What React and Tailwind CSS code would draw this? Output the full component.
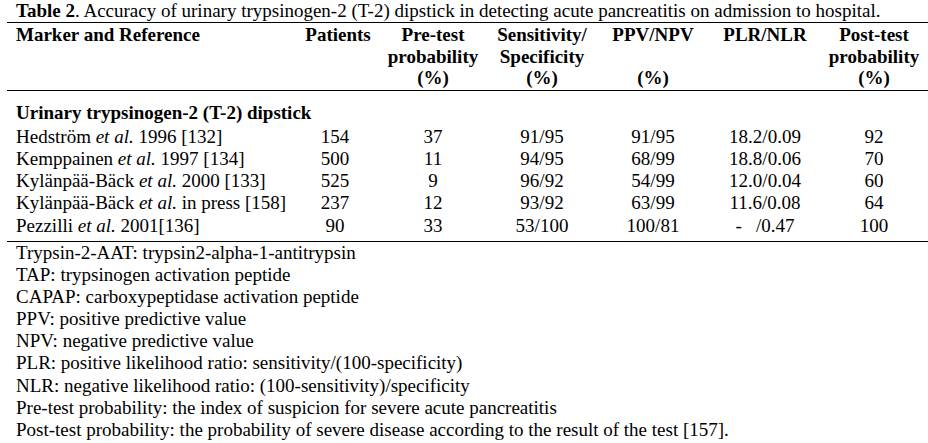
import React from 'react';

const cols = 'grid grid-cols-[283px_96px_94px_124px_98px_126px_92px]';

const rows = [
  { a: 'Hedström', b: '1996 [132]', p: '154', pre: '37', ss: '91/95', pn: '91/95', lr: '18.2/0.09', post: '92' },
  { a: 'Kemppainen', b: '1997 [134]', p: '500', pre: '11', ss: '94/95', pn: '68/99', lr: '18.8/0.06', post: '70' },
  { a: 'Kylänpää-Bäck', b: '2000 [133]', p: '525', pre: '9', ss: '96/92', pn: '54/99', lr: '12.0/0.04', post: '60' },
  { a: 'Kylänpää-Bäck', b: 'in press [158]', p: '237', pre: '12', ss: '93/92', pn: '63/99', lr: '11.6/0.08', post: '64' },
  { a: 'Pezzilli', b: '2001[136]', p: '90', pre: '33', ss: '53/100', pn: '100/81', lr: '-   /0.47', post: '100' },
];

const notes = [
  'Trypsin-2-AAT: trypsin2-alpha-1-antitrypsin',
  'TAP: trypsinogen activation peptide',
  'CAPAP: carboxypeptidase activation peptide',
  'PPV: positive predictive value',
  'NPV: negative predictive value',
  'PLR: positive likelihood ratio: sensitivity/(100-specificity)',
  'NLR: negative likelihood ratio: (100-sensitivity)/specificity',
  'Pre-test probability: the index of suspicion for severe acute pancreatitis',
  'Post-test probability: the probability of severe disease according to the result of the test [157].',
];

export default function App() {
  return (
    <div className="w-[928px] h-[443px] bg-white text-black text-[19px] font-['Liberation_Serif',serif] overflow-hidden">
      {/* Caption */}
      <div className="pl-[16px] leading-[22px] whitespace-nowrap">
        <span className="font-bold">Table 2</span>. Accuracy of urinary trypsinogen-2 (T-2) dipstick in detecting acute pancreatitis on admission to hospital.
      </div>

      <div className="ml-[7px] w-[921px] border-t border-black">
        {/* Header */}
        <div className={`${cols} font-bold leading-[21.5px] pt-[1px] pb-[1px] border-b border-black`}>
          <div className="pl-[9px]">Marker and Reference</div>
          <div className="text-center">Patients</div>
          <div className="text-center">Pre-test<br />probability<br />(%)</div>
          <div className="text-center">Sensitivity/<br />Specificity<br />(%)</div>
          <div className="text-center">PPV/NPV<br /><br />(%)</div>
          <div className="text-center">PLR/NLR</div>
          <div className="text-center whitespace-nowrap">Post-test<br />probability<br />(%)</div>
        </div>

        {/* Body */}
        <div className="pt-[10px] pb-[4px] border-b border-black">
          <div className="pl-[9px] font-bold leading-[24px] mb-[1px]">Urinary trypsinogen-2 (T-2) dipstick</div>
          {rows.map((r, i) => (
            <div key={i} className={`${cols} leading-[22.3px]`}>
              <div className="pl-[9px] whitespace-nowrap">
                {r.a} <i>et al.</i> {r.b}
              </div>
              <div className="text-center pr-[6px]">{r.p}</div>
              <div className="text-center">{r.pre}</div>
              <div className="text-center">{r.ss}</div>
              <div className="text-center">{r.pn}</div>
              <div className="text-center whitespace-pre">{r.lr}</div>
              <div className="text-center">{r.post}</div>
            </div>
          ))}
        </div>
      </div>

      {/* Footnotes */}
      <div className="pl-[16px] leading-[22.1px]">
        {notes.map((n, i) => (
          <div key={i} className="whitespace-nowrap">{n}</div>
        ))}
      </div>
    </div>
  );
}
